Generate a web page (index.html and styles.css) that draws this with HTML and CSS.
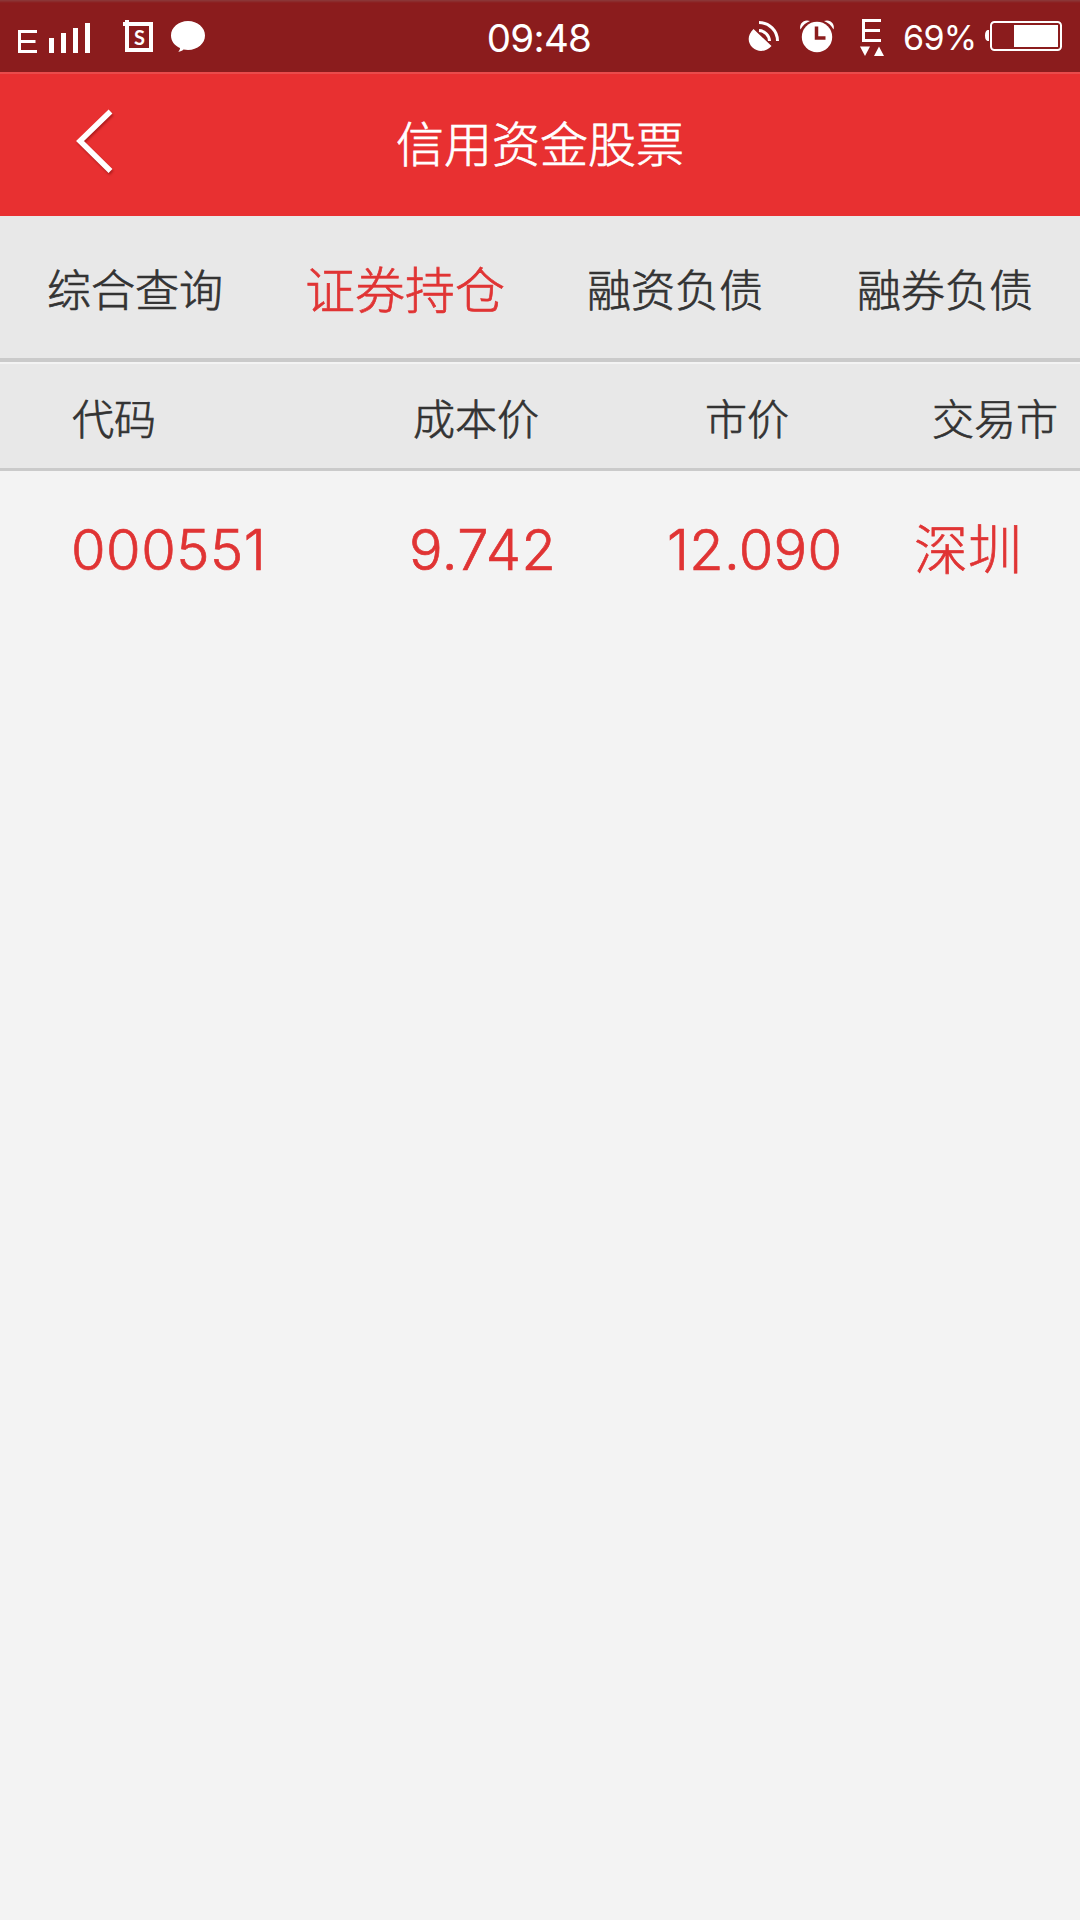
FILE: index.html
```html
<!DOCTYPE html>
<html lang="zh-CN">
<head>
<meta charset="UTF-8">
<title>信用资金股票</title>
<link rel="stylesheet" href="styles.css">
</head>
<body>
<div class="status">
  <div class="status-left">
    <svg width="160" height="72" viewBox="18 0 160 72" class="signal">
      <path d="M37 31.5H19.5V51.5H37M19.5 41.5H35.5" fill="none" stroke="#fff" stroke-width="3"/>
      <path d="M49 38h5v15h-5zM61 33h5v20h-5zM73 28h5v25h-5zM85 23h5v30h-5z" fill="#fff"/>
    </svg>
    <svg width="84" height="72" viewBox="122 0 84 72">
      <path d="M127 24H151V50H127Z" fill="none" stroke="#fff" stroke-width="4"/>
      <path d="M123 22h2v-2h4v6h-6z" fill="#fff"/>
      <text class="s-letter" x="139.5" y="44.5" text-anchor="middle">S</text>
      <path d="M188 21C197.500 21 205 27.500 205 35.500C205 43.500 197.500 50 188 50C186.500 50 185 49.800 183.500 49.500C182 50.800 180.500 51.600 178.300 51.800C179.500 50.500 180 49.300 180 48C174.500 45.500 171 41 171 35.500C171 27.500 178.500 21 188 21Z" fill="#fff"/>
    </svg>
  </div>
  <div class="clock">09:48</div>
  <div class="status-right">
    <svg width="138" height="72" viewBox="748 0 138 72">
      <path d="M753.500 29C747 35 747.500 43 752.500 47.500C758 52.500 766 52 771.500 46Z" fill="#fff"/>
      <path d="M759 22.500A18.500 18.500 0 0 1 777.500 41M759 30.500A11 11 0 0 1 769.500 41" fill="none" stroke="#fff" stroke-width="3"/>
      <circle cx="817" cy="37" r="15.200" fill="#fff"/>
      <path d="M816.500 26.500V38H825.500" fill="none" stroke="#8b1c1d" stroke-width="3.500"/>
      <path d="M800.500 29.500C798.500 24 804 18.500 810 21C806 22.500 802.500 25.500 800.500 29.500ZM833.500 29.500C835.500 24 830 18.500 824 21C828 22.500 831.500 25.500 833.500 29.500Z" fill="#fff"/>
      <path d="M881 20.500H863.500V40.500H881M863.500 30.500H880" fill="none" stroke="#fff" stroke-width="3"/>
      <path d="M860 46.500H870L865 56ZM874 56H884L879 46.500Z" fill="#fff"/>
    </svg>
    <div class="percent">69%</div>
    <svg width="78" height="72" viewBox="985 0 78 72">
      <rect x="991" y="22" width="70" height="28" rx="3.500" fill="none" stroke="#fff" stroke-width="2"/>
      <path d="M1014 25h44v22h-44zM989 30v11h-1.500q-2.500-1-2.500-5.500t2.500-5.500z" fill="#fff"/>
    </svg>
  </div>
</div>
<header class="titlebar">
  <svg class="back" width="44" height="70" viewBox="72 106 44 70">
    <path d="M110.500 111.500L80 141L110.500 171" fill="none" stroke="#fff" stroke-width="5.500"/>
  </svg>
  <h1 class="title">信用资金股票</h1>
</header>
<nav class="tabs">
  <div class="tab">综合查询</div>
  <div class="tab active">证券持仓</div>
  <div class="tab">融资负债</div>
  <div class="tab">融券负债</div>
</nav>
<main>
  <div class="row head">
    <div class="code">代码</div><div class="cost">成本价</div><div class="price">市价</div><div class="market">交易市</div>
  </div>
  <div class="row data">
    <div class="code">000551</div><div class="cost">9.742</div><div class="price">12.090</div><div class="market">深圳</div>
  </div>
</main>
</body>
</html>
```
FILE: styles.css
```css
* { box-sizing: border-box; }
body {
  margin: 0;
  width: 1080px;
  height: 1920px;
  overflow: hidden;
  background: #f3f3f3;
  color: #333;
  font-family: Inter, "Noto Sans CJK SC", sans-serif;
}
svg { display: block; }
.status {
  display: grid;
  grid-template-columns: 1fr 120px 1fr;
  height: 72px;
  background: linear-gradient(#8b3a3b, #8b1c1d 3px);
  color: #fff;
}
.status-left { display: flex; padding-left: 18px; }
.signal { margin-right: -56px; }
.s-letter { font: 700 20px Lato, sans-serif; fill: #fff; }
.clock { font-size: 38.5px; line-height: 76px; text-align: center; letter-spacing: -0.7px; margin-left: -2px; }
.status-right { display: flex; justify-content: flex-end; padding-right: 17px; }
.percent { width: 99px; padding-left: 17px; font-size: 34px; line-height: 75px; letter-spacing: -0.7px; white-space: nowrap; }
.titlebar {
  display: grid;
  grid-template-columns: 200px 1fr 200px;
  align-items: center;
  height: 144px;
  background: #e83031;
  border-top: 2px solid #e94b4b;
  color: #fff;
}
.back { margin: -8px 0 0 72px; filter: drop-shadow(1px 2px 1px rgba(90, 0, 0, 0.4)); }
.title { margin: 0; font-size: 48px; font-weight: 300; text-align: center; line-height: 72px; }
.title, .tabs, .head, .data { -webkit-text-stroke-width: 0.7px; }
.tabs {
  display: grid;
  grid-template-columns: repeat(4, 1fr);
  height: 146px;
  border-bottom: 4px solid #cacaca;
  background: #e8e8e8;
  font-size: 44px;
  font-weight: 300;
  line-height: 151px;
  text-align: center;
}
.active { color: #e03434; font-size: 50px; }
.row {
  display: grid;
  grid-template-columns: 340px 270px 290px 180px;
  white-space: nowrap;
  font-weight: 300;
}
.head {
  height: 109px;
  border-top: 2px solid #f3f3f3;
  border-bottom: 3px solid #cacaca;
  background: #e8e8e8;
  font-size: 42px;
  line-height: 112px;
}
.code { padding-left: 72px; }
.cost { padding-left: 73px; }
.price { padding-left: 95px; }
.market { padding-left: 32px; }
.data { color: #e03434; font-size: 56px; line-height: 159px; }
.data .code { padding-left: 71px; letter-spacing: 0.5px; }
.data .cost { padding-left: 69px; letter-spacing: 0.5px; }
.data .price { padding-left: 57px; letter-spacing: 0.3px; }
.data .market { padding-left: 14px; font-size: 54px; }
```
